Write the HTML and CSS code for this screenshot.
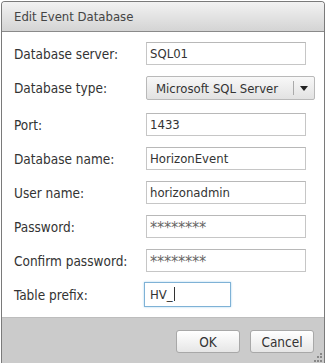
FILE: index.html
```html
<!DOCTYPE html>
<html lang="en">
<head>
    <meta charset="UTF-8">
    <title>Edit Event Database</title>
    <link rel="stylesheet" href="styles.css">
</head>
<body>

<div class="dialog">
    <div class="title">Edit Event Database</div>

    <div class="content">
        <div class="row">
            <label>Database server:</label>
            <div class="field">SQL01</div>
        </div>
        <div class="row row-select">
            <label>Database type:</label>
            <div class="select">
                <span class="select-text">Microsoft SQL Server</span>
                <span class="select-arrow">
                    <svg width="8" height="5" viewBox="0 0 8 5"><path d="M0 0h8L4 5z" fill="#222"/></svg>
                </span>
            </div>
        </div>
        <div class="row">
            <label>Port:</label>
            <div class="field">1433</div>
        </div>
        <div class="row">
            <label>Database name:</label>
            <div class="field">HorizonEvent</div>
        </div>
        <div class="row">
            <label>User name:</label>
            <div class="field">horizonadmin</div>
        </div>
        <div class="row">
            <label>Password:</label>
            <div class="field stars">********</div>
        </div>
        <div class="row">
            <label>Confirm password:</label>
            <div class="field stars">********</div>
        </div>
        <div class="row">
            <label>Table prefix:</label>
            <div class="field short focused">HV_<span class="caret"></span></div>
        </div>
    </div>

    <div class="footer">
        <button>OK</button>
        <button>Cancel</button>
        <svg class="grip" width="8" height="9" viewBox="0 0 8 9">
            <rect x="6" y="0" width="2" height="2" fill="#888"/>
            <rect x="3" y="3" width="2" height="2" fill="#888"/>
            <rect x="6" y="3" width="2" height="2" fill="#888"/>
            <rect x="0" y="7" width="2" height="2" fill="#888"/>
            <rect x="3" y="7" width="2" height="2" fill="#888"/>
            <rect x="6" y="7" width="2" height="2" fill="#888"/>
        </svg>
    </div>
</div>

</body>
</html>
```

FILE: styles.css
```css
body {
    margin: 0;
    padding: 1px 0 0 1px;
    background: #fff;
    font-family: "DejaVu Sans Condensed", "DejaVu Sans", sans-serif;
    font-stretch: condensed;
    color: #333;
}
.dialog {
    width: 322px;
    height: 361px;
    border: 1px solid #7a7a7a;
    border-bottom: none;
    border-radius: 4px 4px 0 0;
    display: flex;
    flex-direction: column;
    overflow: hidden;
}
.title {
    height: 29px;
    line-height: 29px;
    padding-left: 12px;
    font-size: 13px;
    color: #444;
    background: linear-gradient(#f2f2f2, #d4d4d4);
    border-bottom: 1px solid #8a8a8a;
}
.content {
    flex: 1;
    padding: 10px 0 0 12px;
    background: #fff;
}
.row {
    display: flex;
    align-items: center;
    height: 23px;
    margin-bottom: 11px;
}
.row-select {
    height: 24px;
    margin-bottom: 13px;
}
label {
    width: 132px;
    font-size: 13.5px;
    color: #333;
}
.field {
    box-sizing: border-box;
    width: 160px;
    height: 23px;
    line-height: 21px;
    padding-left: 3px;
    border: 1px solid #c6c6c6;
    border-top-color: #b8b8b8;
    font-size: 13px;
    color: #333;
}
.stars {
    font-size: 16px;
    line-height: 24px;
    color: #666;
    letter-spacing: -0.2px;
    padding-left: 3px;
}
.short {
    width: 87px;
    margin-left: -2px;
}
.focused {
    border: 1px solid #7fb2d6;
    box-shadow: 0 0 2px #a9d4f0;
    height: 25px;
    line-height: 23px;
    padding-left: 5px;
}
.caret {
    display: inline-block;
    width: 1px;
    height: 14px;
    margin-left: 1px;
    vertical-align: -2px;
    background: #333;
}
.select {
    box-sizing: border-box;
    width: 169px;
    height: 24px;
    display: flex;
    align-items: center;
    border: 1px solid #b9b9b9;
    border-radius: 2px;
    background: linear-gradient(#f8f8f8, #e2e2e2);
    font-size: 13px;
    color: #333;
}
.select-text {
    flex: 1;
    padding-left: 9px;
}
.select-arrow {
    width: 20px;
    height: 14px;
    border-left: 1px solid #aaa;
    display: flex;
    align-items: center;
    justify-content: center;
}
.footer {
    position: relative;
    height: 47px;
    background: #cbcbcb;
    border-top: 1px solid #bdbdbd;
    display: flex;
    justify-content: flex-end;
    align-items: flex-start;
    gap: 10px;
    padding: 12px 10px 0 0;
    box-sizing: border-box;
}
button {
    height: 23px;
    padding: 0;
    border: 1px solid #a8a8a8;
    border-radius: 3px;
    background: linear-gradient(#ffffff, #e6e6e6);
    font-family: inherit;
    font-stretch: condensed;
    font-size: 13.5px;
    color: #333;
    width: 64px;
}
.grip {
    position: absolute;
    right: 2px;
    bottom: 1px;
}
```
